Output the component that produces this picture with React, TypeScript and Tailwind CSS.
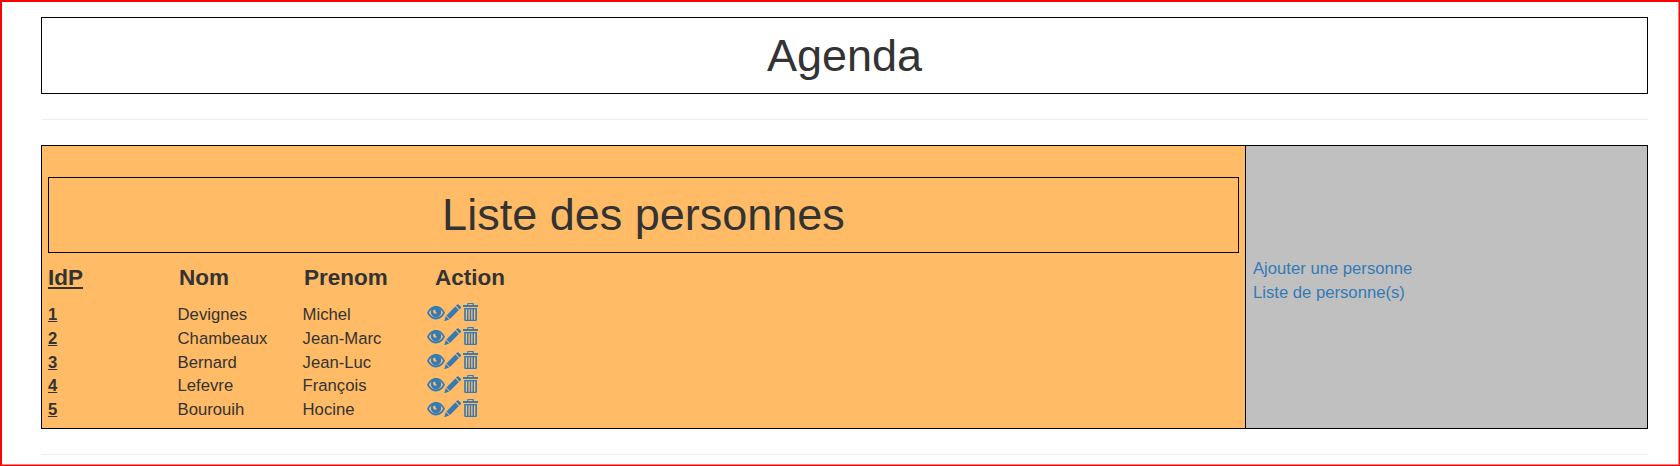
const people = [
  { id: 1, nom: 'Devignes', prenom: 'Michel' },
  { id: 2, nom: 'Chambeaux', prenom: 'Jean-Marc' },
  { id: 3, nom: 'Bernard', prenom: 'Jean-Luc' },
  { id: 4, nom: 'Lefevre', prenom: 'François' },
  { id: 5, nom: 'Bourouih', prenom: 'Hocine' },
];

function EyeIcon() {
  return (
    <svg width="18" height="19" viewBox="0 0 18 19" fill="currentColor">
      <path
        fillRule="evenodd"
        d="M9 3c3.900 0 7 2.700 9 6.700-2 4-5.100 6.700-9 6.700s-7-2.700-9-6.700c2-4 5.100-6.700 9-6.700zM4.700 6.200C3.600 7 2.700 8.200 1.900 9.700c1.700 3 4.200 4.800 7.100 4.800s5.400-1.800 7.100-4.800c-.8-1.500-1.700-2.700-2.800-3.500.6.900.9 1.800.9 2.800a5.200 5.200 0 0 1-10.400 0c0-1 .3-1.900.9-2.800zM7.200 6.400l1.500 1.100-.2 1.500 1.300.6-.7 1.100-2-.3-1.200-1.900c.1-1 .6-1.700 1.300-2.100z"
      />
    </svg>
  );
}

function PencilIcon() {
  return (
    <svg width="18" height="19" viewBox="0 0 18 19" fill="currentColor">
      <path d="M13.300 1.500q.7-.7 1.400 0l2.200 2.200q.7.700 0 1.400l-1.300 1.300-3.600-3.600zM11.300 3.500l3.600 3.600-8.900 8.900-3.600-3.600zM1.800 13.100l3.500 3.500-5.100 1.600z" />
    </svg>
  );
}

function TrashIcon() {
  return (
    <svg width="16" height="19" viewBox="0 0 16 19" fill="currentColor">
      <path
        fillRule="evenodd"
        d="M5 0h5q.8 0 .8.800V2H14.500q.5 0 .5.500V4H0V2.500Q0 2 .5 2h3.700V.8Q4.200 0 5 0zM5.400 1v1h4.200V1zM1.200 5h12.800v11.700q0 1.300-1.200 1.300H2.400q-1.200 0-1.200-1.300zM2.800 6.200v10.500h1.300V6.200zM5.500 6.200v10.500h1.300V6.200zM8.200 6.200v10.500h1.300V6.200zM11 6.200v10.500h1.300V6.200z"
      />
    </svg>
  );
}

export default function App() {
  return (
    <div className="h-[466px] border-t-2 border-r border-b border-l-2 border-[#ff0000] bg-white px-[39px] pt-[15px] font-['Liberation_Sans',Arial,sans-serif] text-[16.67px] leading-[23.8px] text-[#333] shadow-[inset_-1px_-1px_0_#ff8080]">
      <div className="mr-[-9px] w-[1607px]">
        <h1 className="flex h-[77px] items-center justify-center border border-black text-[45px] leading-[50px]">
          Agenda
        </h1>
        <hr className="mt-[25px] border-[#eee]" />
        <main className="mt-[25px] flex h-[284px] border border-black">
          <section className="w-[1204px] border-r border-black bg-[#ffbb66] px-1.5 pt-[31px]">
            <h2 className="flex h-[76px] items-center justify-center border border-black text-[45px] leading-[50px]">
              Liste des personnes
            </h2>
            <div className="grid grid-cols-[131px_125px_131px_auto] pt-3 text-[22.5px] leading-[25px] font-bold">
              <span className="underline">IdP</span>
              <span>Nom</span>
              <span>Prenom</span>
              <span>Action</span>
            </div>
            <div className="pt-[13px]">
              {people.map((p) => (
                <div key={p.id} className="grid h-[23.8px] grid-cols-[129.6px_125px_124.4px_auto]">
                  <span className="font-bold underline">{p.id}</span>
                  <span>{p.nom}</span>
                  <span>{p.prenom}</span>
                  <span className="flex pt-[0.4px] text-[#337ab7]">
                    <a href="#" className="w-[17px]"><EyeIcon /></a>
                    <a href="#" className="w-[19px]"><PencilIcon /></a>
                    <a href="#"><TrashIcon /></a>
                  </span>
                </div>
              ))}
            </div>
          </section>
          <nav className="flex flex-1 flex-col items-start justify-center bg-[#c0c0c0] pl-[7px] pb-[12px] text-[#337ab7]">
            <a href="#">Ajouter une personne</a>
            <a href="#">Liste de personne(s)</a>
          </nav>
        </main>
        <hr className="mt-[25px] border-[#eee]" />
      </div>
    </div>
  );
}
